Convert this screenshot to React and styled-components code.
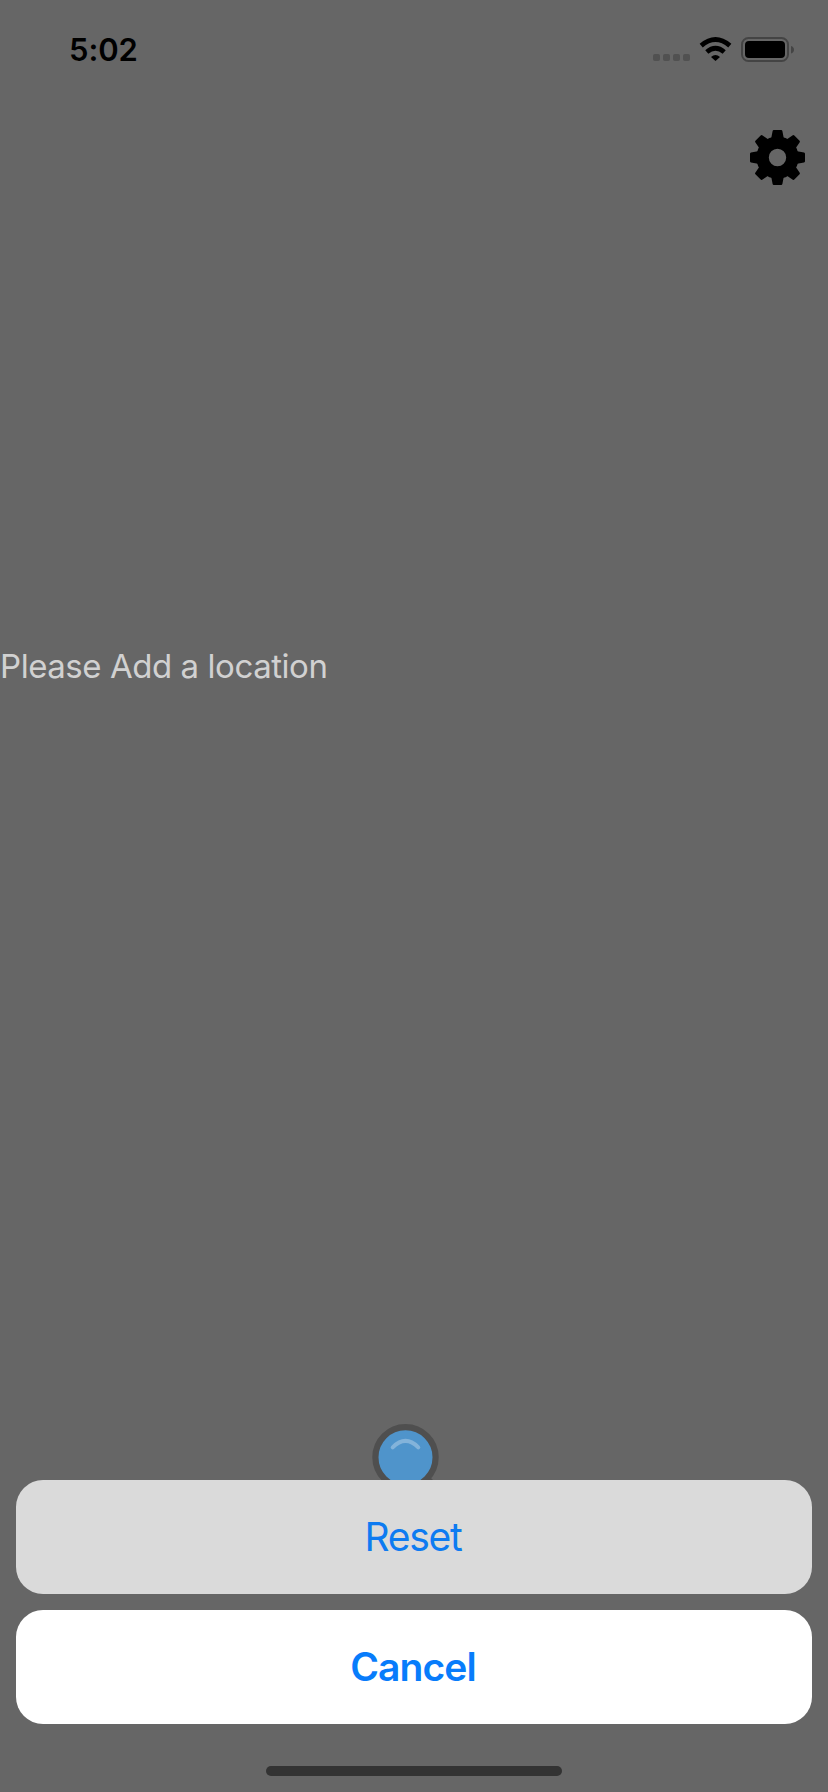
import React from "react";
import styled, { createGlobalStyle } from "styled-components";

const GlobalStyle = createGlobalStyle`
  body { margin: 0; background: #666666; }
  * { box-sizing: border-box; }
`;

const Screen = styled.div`
  position: relative;
  width: 828px;
  height: 1792px;
  overflow: hidden;
  display: flex;
  flex-direction: column;
  background: #666666;
  font-family: Inter, "Liberation Sans", sans-serif;
`;

const StatusBar = styled.header`
  height: 96px;
  flex: none;
  display: flex;
  justify-content: space-between;
  align-items: flex-start;
  padding: 30px 34px 0 69px;
`;

const Time = styled.span`
  font-size: 31px;
  line-height: 40px;
  font-weight: 600;
  letter-spacing: -0.1px;
  color: #000;
`;

const StatusIcons = styled.svg`
  display: block;
  width: 142px;
  height: 40px;
`;

const Toolbar = styled.div`
  flex: none;
  height: 96px;
  display: flex;
  justify-content: flex-end;
  padding: 33px 22px 0 0;
`;

const IconButton = styled.button`
  width: ${(p) => p.$size}px;
  height: ${(p) => p.$size}px;
  padding: 0;
  border: 0;
  background: none;
  svg { display: block; overflow: visible; }
`;

const Message = styled.p`
  margin: 446px 0 0;
  flex: none;
  font-size: 33px;
  line-height: 56px;
  letter-spacing: -0.45px;
  color: #d1d1d1;
  white-space: nowrap;
`;

const Footer = styled.footer`
  margin-top: auto;
  height: 370px;
  padding-left: 370px;
`;

const ActionSheet = styled.section`
  position: absolute;
  left: 16px;
  right: 16px;
  bottom: 16px;
  display: flex;
  flex-direction: column;
  align-items: center;
  gap: 16px;
`;

const Action = styled.button`
  width: 100%;
  height: 114px;
  padding: 0 2px 2px 0;
  border: 0;
  border-radius: 27px;
  background: ${(p) => (p.$primary ? "#ffffff" : "#dadada")};
  color: ${(p) => (p.$primary ? "#087cfb" : "#0d7bf1")};
  font-family: inherit;
  font-size: 39px;
  font-weight: ${(p) => (p.$primary ? 600 : 400)};
  letter-spacing: ${(p) => p.$tracking}px;
`;

const HomeIndicator = styled.div`
  width: 296px;
  height: 10px;
  margin-top: 26px;
  border-radius: 5px;
  background: #333333;
`;

function Gear() {
  return (
    <svg width="57" height="57" viewBox="-28.5 -28.5 57 57">
      <circle r="14.9" fill="none" stroke="#000" strokeWidth="12.4" />
      {[0, 45, 90, 135, 180, 225, 270, 315].map((angle) => (
        <path
          key={angle}
          transform={`rotate(${angle})`}
          d="M-5.3 -18L-3.7 -26.3H3.7L5.3 -18Z"
          stroke="#000"
          strokeWidth="2.4"
          strokeLinejoin="round"
        />
      ))}
    </svg>
  );
}

function Magnifier() {
  return (
    <svg width="90" height="90" viewBox="0 0 90 90">
      <path d="M55 55L80 80" stroke="#4f4f4f" strokeWidth="7" strokeLinecap="round" />
      <circle cx="35.5" cy="35.3" r="30.1" fill="#4f94cb" stroke="#4f4f4f" strokeWidth="6.2" />
      <path d="M22.7 25.3Q35.5 12.6 48.3 25.3" fill="none" stroke="#83b3da" strokeWidth="4" strokeLinecap="round" />
    </svg>
  );
}

function DeviceStatus() {
  return (
    <StatusIcons viewBox="652 30 142 40">
      {[653, 663, 673, 683].map((x) => (
        <rect key={x} x={x} y="54" width="7" height="7" rx="2" fill="#515151" />
      ))}
      <g fill="none" stroke="#000" strokeWidth="4.8">
        <path d="M701.2 45.6Q715.5 33.4 729.8 45.6" />
        <path d="M706.8 52Q715.5 44.6 724.2 52" />
      </g>
      <path d="M711 57Q715.5 52.8 720 57L715.5 61Z" />
      <rect x="742" y="38" width="46" height="23" rx="6.5" fill="none" stroke="#444" strokeWidth="2" />
      <rect x="745" y="41" width="40" height="17" rx="4" />
      <path d="M791 46Q794 47 794 49.7T791 53.5Z" fill="#444" />
    </StatusIcons>
  );
}

export default function App() {
  return (
    <>
      <GlobalStyle />
      <Screen>
        <StatusBar>
          <Time>5:02</Time>
          <DeviceStatus />
        </StatusBar>
        <Toolbar>
          <IconButton $size={57} aria-label="Settings"><Gear /></IconButton>
        </Toolbar>
        <Message>Please Add a location</Message>
        <Footer>
          <IconButton $size={90} aria-label="Search"><Magnifier /></IconButton>
        </Footer>
        <ActionSheet>
          <Action $tracking={-1.3}>Reset</Action>
          <Action $primary $tracking={-0.9}>Cancel</Action>
          <HomeIndicator />
        </ActionSheet>
      </Screen>
    </>
  );
}
